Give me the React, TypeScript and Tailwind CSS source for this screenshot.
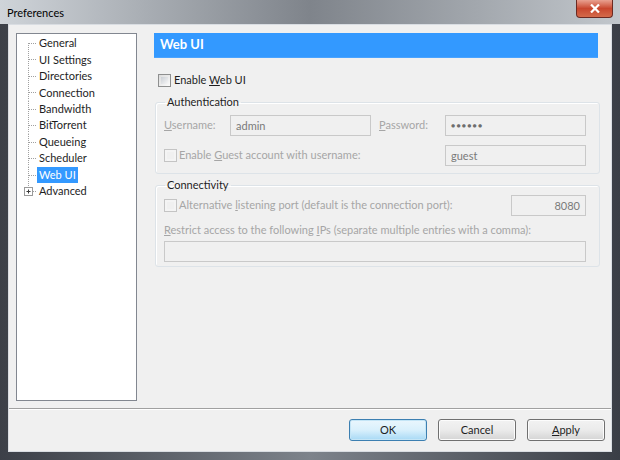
import React from "react";

const font = { fontFamily: 'Lato, "Noto Sans", sans-serif' };

function TreeRow({
  label,
  first,
  last,
  selected,
  plus,
}: {
  label: string;
  first?: boolean;
  last?: boolean;
  selected?: boolean;
  plus?: boolean;
}) {
  return (
    <div className="flex items-center h-[16.44px]">
      <svg width="20" height="16.44" className="shrink-0">
        <line
          x1="11.5"
          y1={first ? 8 : 0}
          x2="11.5"
          y2={last ? 8 : 16.44}
          stroke="#a0a0a0"
          strokeDasharray="1 1"
        />
        <line x1="12" y1="8.5" x2="20" y2="8.5" stroke="#a0a0a0" strokeDasharray="1 1" />
        {plus && (
          <g>
            <rect x="7.5" y="4.5" width="8" height="8" fill="#fff" stroke="#9a9a9a" />
            <line x1="9.5" y1="8.5" x2="13.5" y2="8.5" stroke="#3a3a3a" />
            <line x1="11.5" y1="6.5" x2="11.5" y2="10.5" stroke="#3a3a3a" />
          </g>
        )}
      </svg>
      <span
        className={
          "px-[2px] leading-[16px] text-[11px] " +
          (selected ? "bg-[#3399ff] text-white" : "text-[#1e1e1e]")
        }
      >
        {label}
      </span>
    </div>
  );
}

function Checkbox({ disabled }: { disabled?: boolean }) {
  return (
    <span
      className={
        "inline-block w-[13px] h-[13px] shrink-0 border " +
        (disabled
          ? "border-[#c4c4c4] bg-[#f4f4f4]"
          : "border-[#8e8f8f] bg-gradient-to-br from-[#dcdcdc] to-[#fbfbfb]")
      }
    >
      <span
        className={
          "block m-[2px] w-[7px] h-[7px] " +
          (disabled ? "bg-[#f0f0f0]" : "bg-gradient-to-br from-[#cbcfd5] to-[#f6f6f6]")
        }
      />
    </span>
  );
}

function Input({ value, className, right }: { value: string; className: string; right?: boolean }) {
  return (
    <div
      className={
        "h-[21px] shrink-0 border border-[#c9c9c9] bg-[#f0f0f0] text-[11px] leading-[19px] text-[#7a7a7a] px-[5px] " +
        (right ? "text-right " : "") +
        className
      }
    >
      {value}
    </div>
  );
}

function Button({ children, primary }: { children: React.ReactNode; primary?: boolean }) {
  return (
    <div
      className={
        "w-[78px] h-[22px] rounded-[3px] border flex items-center justify-center text-[11px] text-[#1e1e1e] " +
        (primary
          ? "border-[#3c7fb1] bg-gradient-to-b from-[#eaf6fd] via-[#d9f0fc] to-[#a7d9f5] shadow-[inset_0_0_0_1px_#c4e5f6]"
          : "border-[#707070] bg-gradient-to-b from-[#f2f2f2] via-[#ebebeb] to-[#d4d4d4] shadow-[inset_0_0_0_1px_#fcfcfc]")
      }
    >
      {children}
    </div>
  );
}

export default function App() {
  return (
    <div
      className="w-[620px] h-[460px] flex flex-col bg-gradient-to-r from-[#3c4048] via-[#7d838b] to-[#3a3e46] overflow-hidden"
      style={font}
    >
      {/* title bar */}
      <div className="h-[24px] shrink-0 flex items-start justify-between bg-gradient-to-r from-[#cfd4d9] via-[#7f848b] to-[#c2c7cc]">
        <span className="ml-[7px] mt-[5px] text-[11px] leading-[15px] text-black">Preferences</span>
        <div className="mr-[7px] w-[37px] h-[18px] rounded-b-[4px] border border-t-0 border-[#6b2a22] bg-gradient-to-b from-[#e8a090] via-[#c8462e] to-[#d46a4a] flex items-center justify-center">
          <svg width="10" height="9" viewBox="0 0 10 9">
            <path d="M1 0.5 L9 8.5 M9 0.5 L1 8.5" stroke="#fff" strokeWidth="2.2" />
          </svg>
        </div>
      </div>
      {/* body */}
      <div className="flex-1 flex px-[8px] pb-[8px]">
        <div className="flex-1 flex flex-col bg-[#f0f0f0] border border-[#d9dde2]">
          <div className="flex pt-[8px] pl-[7px]">
            {/* tree */}
            <div className="w-[121px] h-[368px] bg-white border border-[#828790] pt-[1px]">
              <TreeRow label="General" first />
              <TreeRow label="UI Settings" />
              <TreeRow label="Directories" />
              <TreeRow label="Connection" />
              <TreeRow label="Bandwidth" />
              <TreeRow label="BitTorrent" />
              <TreeRow label="Queueing" />
              <TreeRow label="Scheduler" />
              <TreeRow label="Web UI" selected />
              <TreeRow label="Advanced" last plus />
            </div>
            {/* right panel */}
            <div className="ml-[17px] w-[446px] flex flex-col">
              <div className="h-[25px] w-[444px] bg-[#3399ff] border-b border-[#4aa3ff] flex items-center pl-[6px]">
                <span className="text-white font-bold text-[13px]">Web UI</span>
              </div>
              <div className="mt-[14px] h-[16px] flex items-center pl-[4px] gap-[3px] text-[11px] text-[#1e1e1e]">
                <Checkbox />
                <span>
                  Enable <u>W</u>eb UI
                </span>
              </div>
              <fieldset className="mt-[6px] ml-[1px] w-[445px] border border-[#dde3e8] rounded-[3px] pl-[8px] pr-[13px] pb-[7px] shadow-[inset_1px_1px_0_#ffffff]">
                <legend className="ml-[1px] px-[2px] text-[11px] leading-[16px] text-[#1e1e1e]">Authentication</legend>
                <div className="mt-[5px] flex items-center text-[11px] text-[#a6a6a6]">
                  <span className="w-[66px]">
                    <u>U</u>sername:
                  </span>
                  <Input value="admin" className="w-[141px]" />
                  <span className="ml-[8px] w-[66px]">
                    <u>P</u>assword:
                  </span>
                  <Input value="●●●●●●" className="w-[141px] !text-[7px] tracking-[1.2px] !text-[#6e6e6e]" />
                </div>
                <div className="mt-[9px] flex items-center text-[11px] text-[#a6a6a6]">
                  <Checkbox disabled />
                  <span className="ml-[2px]">
                    Enable <u>G</u>uest account with username:
                  </span>
                  <div className="flex-1" />
                  <Input value="guest" className="w-[141px]" />
                </div>
              </fieldset>
              <fieldset className="mt-[3px] ml-[1px] w-[445px] border border-[#dde3e8] rounded-[3px] pl-[8px] pr-[13px] pb-[4px] shadow-[inset_1px_1px_0_#ffffff]">
                <legend className="ml-[1px] px-[2px] text-[11px] leading-[16px] text-[#1e1e1e]">Connectivity</legend>
                <div className="mt-[2px] flex items-center text-[11px] text-[#a6a6a6]">
                  <Checkbox disabled />
                  <span className="ml-[2px]">
                    Alternative <u>l</u>istening port (default is the connection port):
                  </span>
                  <div className="flex-1" />
                  <Input value="8080" className="w-[75px]" right />
                </div>
                <div className="mt-[6px] text-[11px] leading-[16px] text-[#a6a6a6] whitespace-nowrap">
                  <u>R</u>estrict access to the following <u>I</u>Ps (separate multiple entries with a comma):
                </div>
                <Input value="" className="mt-[3px] w-full" />
              </fieldset>
            </div>
          </div>
          <div className="mt-[7px] h-[2px] border-t border-[#a0a0a0] border-b border-b-white" />
          <div className="mt-[9px] flex justify-end gap-[11px] pr-[6px]">
            <Button primary>OK</Button>
            <Button>Cancel</Button>
            <Button>
              <span>
                <u>A</u>pply
              </span>
            </Button>
          </div>
        </div>
      </div>
    </div>
  );
}
